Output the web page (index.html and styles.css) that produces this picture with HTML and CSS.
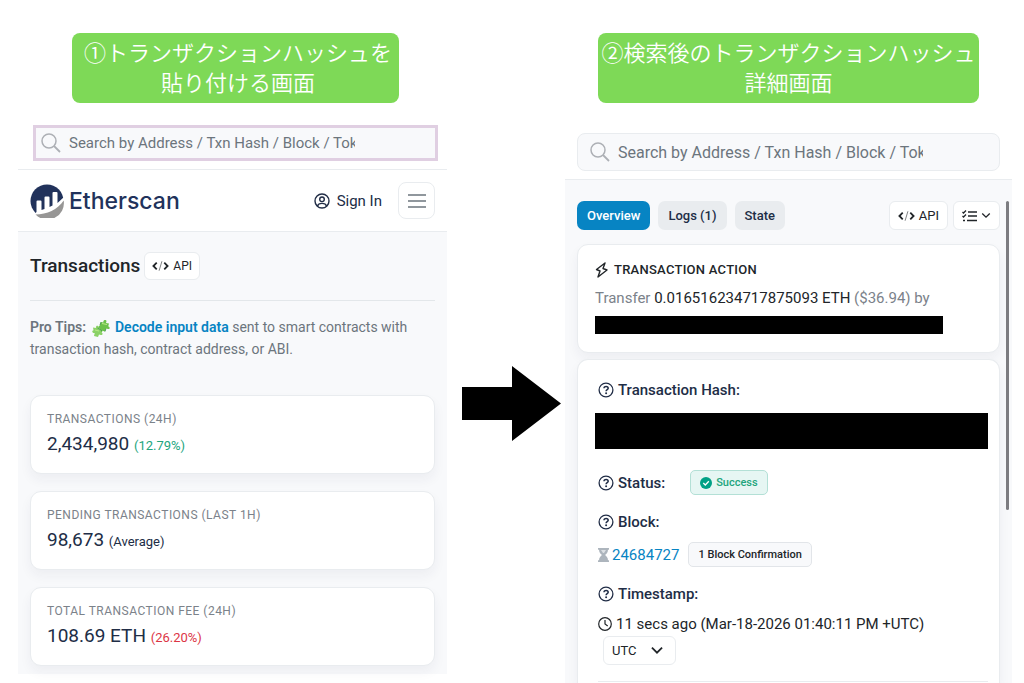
FILE: index.html
```html
<!DOCTYPE html>
<html lang="ja">
<head>
  <meta charset="UTF-8">
  <meta name="viewport" content="width=device-width, initial-scale=1.0">
  <title>Etherscan</title>
  <link rel="stylesheet" href="styles.css">
</head>
<body>
  <svg width="0" height="0" class="defs">
    <symbol id="search" viewBox="0 0 20 20">
      <circle cx="8" cy="8" r="7" fill="none" stroke="currentColor" stroke-width="1.5"/>
      <path d="M13 13l6 6" stroke="currentColor" stroke-width="1.8"/>
    </symbol>
    <symbol id="code" viewBox="0 0 18 12">
      <path d="M5 2.5L1.5 6 5 9.5M13 2.5L16.5 6 13 9.5" fill="none" stroke="currentColor" stroke-width="1.9"/>
      <path d="M10.5 1L7.5 11" stroke="currentColor" stroke-width="1" opacity=".6"/>
    </symbol>
    <symbol id="chevron" viewBox="0 0 12 8">
      <path d="M1.5 1.5L6 6l4.5-4.5" fill="none" stroke="currentColor" stroke-width="1.6"/>
    </symbol>
    <symbol id="help" viewBox="0 0 16 16">
      <circle cx="8" cy="8" r="6.9" fill="none" stroke="currentColor" stroke-width="1.3"/>
      <path d="M6 6.3c0-2.5 4.2-2.3 4.2 0C10.2 7.7 8.1 7.7 8.1 9.3" fill="none" stroke="currentColor" stroke-width="1.5"/>
      <circle cx="8.1" cy="11.3" r="1" fill="currentColor"/>
    </symbol>
  </svg>

  <div class="page">
    <section class="panel">
      <h2 class="banner">①トランザクションハッシュを<br>貼り付ける画面</h2>
      <label class="search search-marked">
        <svg class="search-icon"><use href="#search"/></svg>
        <input type="text" aria-label="Search" placeholder="Search by Address / Txn Hash / Block / Token">
      </label>

      <header class="nav">
        <a class="logo" href="#">
          <svg width="34" height="34" viewBox="0 0 34 34">
            <circle cx="17" cy="17" r="16.5" fill="#21325b"/>
            <path d="M6.5 28V17.5q0-1 1-1h3q1 0 1 1V26l3-1V13.5q0-1 1-1h3q1 0 1 1V23l3-1.5V9q0-1 1-1h3q1 0 1 1v10L34 13v21H0z" fill="#fff"/>
            <path d="M5.5 30.5C17 30.5 27.5 25.5 33.7 16.5A16.5 16.5 0 0 1 5.5 30.5z" fill="#979695"/>
          </svg>
          <span>Etherscan</span>
        </a>
        <a class="sign-in" href="#">
          <svg width="16" height="16" viewBox="0 0 16 16" fill="none" stroke="currentColor" stroke-width="1.4">
            <circle cx="8" cy="8" r="7"/>
            <circle cx="8" cy="6.3" r="2.3"/>
            <path d="M3.5 13c1-3.5 8-3.5 9 0"/>
          </svg>
          Sign In
        </a>
        <button class="menu" aria-label="Menu">
          <svg width="18" height="14" viewBox="0 0 18 14" stroke="#6c757d" stroke-width="1.4"><path d="M0 1h18M0 7h18M0 13h18"/></svg>
        </button>
      </header>

      <main class="transactions">
        <div class="title">
          <h1>Transactions</h1>
          <button class="btn"><svg width="17" height="12"><use href="#code"/></svg>API</button>
        </div>
        <p class="tips">
          <b>Pro Tips:</b>
          <svg class="puzzle" viewBox="0 0 18 18">
            <path d="M8 6l1-3 2.500.5C10.500 1 14 0 14.500 2l-.5 2 3 .5-.8 3c2 0 2 3-.2 2.500L14 9.500l-1 3-2.800-.8c.5 2.500-2.700 2.800-2.700.5L8 10 5.500 9z" fill="#6cc24a"/>
            <path d="M1 8.500l3 .5c-.7-3 2.700-3 2.800-.6L6.500 10l3 .8-.7 2.600c2.500-.2 2.200 3 0 2.600L7 15.500 6 18l-4-1 .7-3C0 14.500-.5 11.500 1.500 11.300z" fill="#8bd166"/>
            <path d="M10 4.500l5 1M3 11l4 1" stroke="#b9e986" stroke-width="1"/>
            <path d="M8 6l1-3M5.500 9L10 11.700M14 9.500l-1 3" fill="none" stroke="#3f8f4f" stroke-width=".8"/>
          </svg>
          <a href="#">Decode input data</a> sent to smart contracts with transaction hash, contract address, or ABI.
        </p>

        <div class="stats">
          <div class="stat">
            <h3>TRANSACTIONS (24H)</h3>
            <p>2,434,980 <small class="up">(12.79%)</small></p>
          </div>
          <div class="stat">
            <h3>PENDING TRANSACTIONS (LAST 1H)</h3>
            <p>98,673 <small>(Average)</small></p>
          </div>
          <div class="stat">
            <h3>TOTAL TRANSACTION FEE (24H)</h3>
            <p>108.69 ETH <small class="down">(26.20%)</small></p>
          </div>
        </div>
      </main>
    </section>

    <div class="arrow">
      <svg width="99" height="76" viewBox="0 0 99 76"><path d="M0 21h50V0l49 37.5L50 75V54H0z"/></svg>
    </div>

    <section class="panel">
      <h2 class="banner banner-wide">②検索後のトランザクションハッシュ<br>詳細画面</h2>
      <label class="search search-large">
        <svg class="search-icon"><use href="#search"/></svg>
        <input type="text" aria-label="Search" placeholder="Search by Address / Txn Hash / Block / Token">
      </label>

      <main class="details">
        <div class="tabs">
          <button class="tab active">Overview</button>
          <button class="tab">Logs (1)</button>
          <button class="tab">State</button>
          <div class="tools">
            <button class="btn"><svg width="17" height="12"><use href="#code"/></svg>API</button>
            <button class="btn" aria-label="List options">
              <svg width="15" height="12" viewBox="0 0 15 12" fill="none" stroke="currentColor" stroke-width="1.3"><path d="M6 2h9M6 6h9M5 10.5h10M.5 2l1 1L4 .5M.5 6l1 1L4 4.5M1 10.5h2"/></svg>
              <svg width="10" height="7"><use href="#chevron"/></svg>
            </button>
          </div>
        </div>

        <div class="card action">
          <h3>
            <svg width="13" height="16" viewBox="0 0 13 16" fill="none" stroke="currentColor" stroke-width="1.4" stroke-linejoin="round"><path d="M10 1L1.5 7.5l3.500 1.500-2 6L12 8 8 6.5z"/></svg>
            TRANSACTION ACTION
          </h3>
          <p>Transfer <span>0.016516234717875093 ETH</span> ($36.94) by</p>
          <div class="redacted"></div>
        </div>

        <div class="card info">
          <h4><svg width="16" height="16"><use href="#help"/></svg>Transaction Hash:</h4>
          <div class="redacted redacted-hash"></div>
          <div class="status">
            <h4><svg width="16" height="16"><use href="#help"/></svg>Status:</h4>
            <span class="badge success">
              <svg width="12" height="12" viewBox="0 0 12 12"><circle cx="6" cy="6" r="6" fill="#00a186"/><path d="M3.3 6l2 2 3.5-3.8" fill="none" stroke="#fff" stroke-width="1.3"/></svg>
              Success
            </span>
          </div>
          <h4><svg width="16" height="16"><use href="#help"/></svg>Block:</h4>
          <div class="block">
            <svg width="11" height="14" viewBox="0 0 11 14"><path d="M0 0h11v1.7h-1c0 3-2 4.300-3 5.300 1 1 3 2.300 3 5.300h1V14H0v-1.700h1C1 9.300 3 8 4 7 3 6 1 4.700 1 1.700H0z" fill="#adb5bd"/><path d="M3 2h5L6 5H5z" fill="#dde1e5"/></svg>
            <a href="#">24684727</a>
            <span class="badge">1 Block Confirmation</span>
          </div>
          <h4><svg width="16" height="16"><use href="#help"/></svg>Timestamp:</h4>
          <p class="time">
            <svg width="14" height="14" viewBox="0 0 14 14" fill="none" stroke="currentColor" stroke-width="1.2"><circle cx="7" cy="7" r="6.3"/><path d="M7 3v4l2.7 2"/></svg>
            11 secs ago (Mar-18-2026 01:40:11 PM +UTC)
          </p>
          <label class="zone">
            <select aria-label="Time zone"><option>UTC</option><option>Local</option></select>
            <svg width="14" height="9"><use href="#chevron"/></svg>
          </label>
          <hr>
        </div>
        <div class="scrollbar"></div>
      </main>
    </section>
  </div>
</body>
</html>
```
FILE: styles.css
```css
* {
  box-sizing: border-box;
}

body {
  margin: 0;
  background: #fff;
  color: #212529;
  font-family: Roboto, "Noto Sans CJK JP", sans-serif;
  font-size: 15px;
  line-height: 20px;
}

h1, h2, h3, h4, p {
  margin: 0;
}

a {
  color: #0784c3;
  text-decoration: none;
}

button, input, select {
  font-family: inherit;
  color: inherit;
}

svg {
  flex-shrink: 0;
}

.defs {
  position: absolute;
}

.page {
  display: grid;
  grid-template-columns: 429fr 118px 447fr;
  min-height: 100vh;
  padding: 33px 12px 0 18px;
}

.panel {
  display: flex;
  flex-direction: column;
  min-width: 0;
}

.banner {
  align-self: center;
  margin-left: 6px;
  padding: 3px 7px 7px 12px;
  border-radius: 8px;
  background: #7ed957;
  color: #fff;
  font-family: "Noto Sans CJK JP", sans-serif;
  font-size: 22px;
  font-weight: 350;
  line-height: 30px;
  text-align: center;
}

.banner-wide {
  margin-left: 0;
  padding: 3px 3px 7px;
}

.arrow {
  display: flex;
  justify-content: flex-end;
  align-items: flex-start;
  padding: 333px 4px 0 0;
}

/* search */
.search {
  display: flex;
  align-items: center;
  background: #f8f9fb;
}

.search input {
  flex: 1;
  min-width: 0;
  padding: 0 80px 0 0;
  border: none;
  outline: none;
  background: none;
  font-size: 15px;
}

.search input::placeholder {
  color: #6c757d;
}

.search-icon {
  width: 20px;
  height: 20px;
  margin-right: 8px;
  color: #adb0b5;
}

.search-marked {
  height: 36px;
  margin: 22px 9px 8px 15px;
  padding-left: 5px;
  border: 3px solid #e0cfe2;
}

.search-large {
  height: 38px;
  margin: 30px 12px 8px;
  padding-left: 12px;
  border: 1px solid #e9ecef;
  border-radius: 8px;
}

.search-large input {
  padding-right: 76px;
  font-size: 16px;
}

/* nav */
.nav {
  display: flex;
  align-items: center;
  height: 63px;
  padding: 0 12px;
  border-top: 1px solid #e9ecef;
  border-bottom: 1px solid #e9ecef;
}

.logo {
  display: flex;
  align-items: center;
  gap: 5px;
  margin-right: auto;
  color: #21325b;
  font-family: Inter, sans-serif;
  font-size: 23px;
  font-weight: 500;
}

.sign-in {
  display: flex;
  align-items: center;
  gap: 7px;
  margin-right: 16px;
  color: #212d46;
}

.menu {
  display: flex;
  align-items: center;
  justify-content: center;
  width: 37px;
  height: 37px;
  padding: 0;
  border: 1px solid #e9ecef;
  border-radius: 8px;
  background: #fff;
}

.btn {
  display: inline-flex;
  align-items: center;
  gap: 4px;
  height: 28px;
  padding: 0 7px;
  border: 1px solid #e9ecef;
  border-radius: 6px;
  background: #fff;
  font-size: 12px;
}

/* transactions */
.transactions {
  padding: 20px 12px 8px;
  background: #f8f9fb;
}

.title {
  display: flex;
  align-items: center;
  gap: 4px;
  padding-bottom: 20px;
  border-bottom: 1px solid #e3e7ea;
}

.title h1 {
  font-size: 19px;
  font-weight: 500;
}

.tips {
  margin-top: 15px;
  color: #6c757d;
  font-size: 14px;
  line-height: 22px;
}

.tips b, .tips a {
  font-weight: 600;
}

.puzzle {
  width: 18px;
  height: 18px;
  margin: 0 2px;
  vertical-align: middle;
}

.stats {
  display: grid;
  gap: 17px;
  margin-top: 35px;
}

.stat {
  padding: 12px 16px 16px;
  border: 1px solid #e9ecef;
  border-radius: 11px;
  background: #fff;
  box-shadow: 0 6px 12px rgba(33, 45, 70, 0.05);
}

.stat h3 {
  color: #7b828a;
  font-size: 12px;
  font-weight: 400;
  letter-spacing: 0.04em;
  line-height: 22px;
}

.stat p {
  margin-top: 1px;
  color: #212d46;
  font-size: 19px;
  line-height: 26px;
}

.stat small {
  font-size: 13px;
  line-height: 13px;
}

.stat .up {
  color: #22a57d;
}

.stat .down {
  color: #dc3545;
}

/* transaction details */
.details {
  position: relative;
  display: flex;
  flex: 1;
  flex-direction: column;
  padding: 21px 12px 0;
  border-top: 1px solid #e9ecef;
  background: #f8f9fb;
}

.tabs {
  display: flex;
  gap: 8px;
  margin-bottom: 14px;
}

.tools {
  display: flex;
  gap: 5px;
  margin-left: auto;
}

.tools .btn {
  height: 29px;
  padding: 0 8px;
  font-size: 13px;
}

.tab {
  height: 29px;
  padding: 0 10px;
  border: none;
  border-radius: 7px;
  background: #e9ecef;
  color: #212d46;
  font-size: 13px;
  font-weight: 500;
}

.tab.active {
  background: #0784c3;
  color: #fff;
}

.card {
  border: 1px solid #e9ecef;
  border-radius: 11px;
  background: #fff;
  box-shadow: 0 6px 12px rgba(33, 45, 70, 0.05);
}

.action {
  padding: 15px 17px 18px;
}

.action h3 {
  display: flex;
  align-items: center;
  gap: 6px;
  font-size: 13px;
  font-weight: 500;
  letter-spacing: 0.02em;
}

.action p {
  margin: 8px 0;
  color: #7b828a;
}

.action p span {
  color: #212529;
}

.redacted {
  width: 90%;
  height: 18px;
  background: #000;
}

.info {
  flex: 1;
  margin-top: 6px;
  padding: 20px 11px 0 20px;
  border-bottom: none;
  border-radius: 11px 11px 0 0;
}

.info h4 {
  display: flex;
  align-items: center;
  gap: 4px;
  color: #212d46;
  font-size: 15px;
  font-weight: 500;
}

.redacted-hash {
  width: auto;
  height: 36px;
  margin: 13px 0 21px -3px;
}

.status {
  display: flex;
  align-items: center;
  gap: 25px;
  margin-bottom: 17px;
}

.badge {
  display: inline-flex;
  align-items: center;
  gap: 4px;
  height: 25px;
  padding: 0 9px;
  border: 1px solid #e2e5e9;
  border-radius: 5px;
  background: #f8f9fb;
  font-size: 11px;
  font-weight: 500;
}

.success {
  border-color: #b3e0d6;
  background: #e6f6f3;
  color: #22a57d;
}

.block {
  display: flex;
  align-items: center;
  gap: 3px;
  margin: 10px 0 17px;
}

.block .badge {
  margin-left: 6px;
}

.time {
  display: flex;
  align-items: center;
  gap: 4px;
  margin: 10px 0 2px;
}

.zone {
  display: inline-grid;
  align-items: center;
  width: 73px;
  margin-left: 5px;
}

.zone select, .zone svg {
  grid-area: 1 / 1;
}

.zone select {
  height: 29px;
  padding: 0 8px;
  border: 1px solid #e9ecef;
  border-radius: 6px;
  background: #fff;
  font-size: 13px;
  appearance: none;
}

.zone svg {
  justify-self: end;
  margin-right: 12px;
  pointer-events: none;
}

.info hr {
  margin: 16px 0 0;
  border: none;
  border-top: 1px solid #e9ecef;
}

.scrollbar {
  position: absolute;
  top: 21px;
  right: 3px;
  width: 3px;
  height: 309px;
  border-radius: 2px;
  background: #7c7c80;
}
```
